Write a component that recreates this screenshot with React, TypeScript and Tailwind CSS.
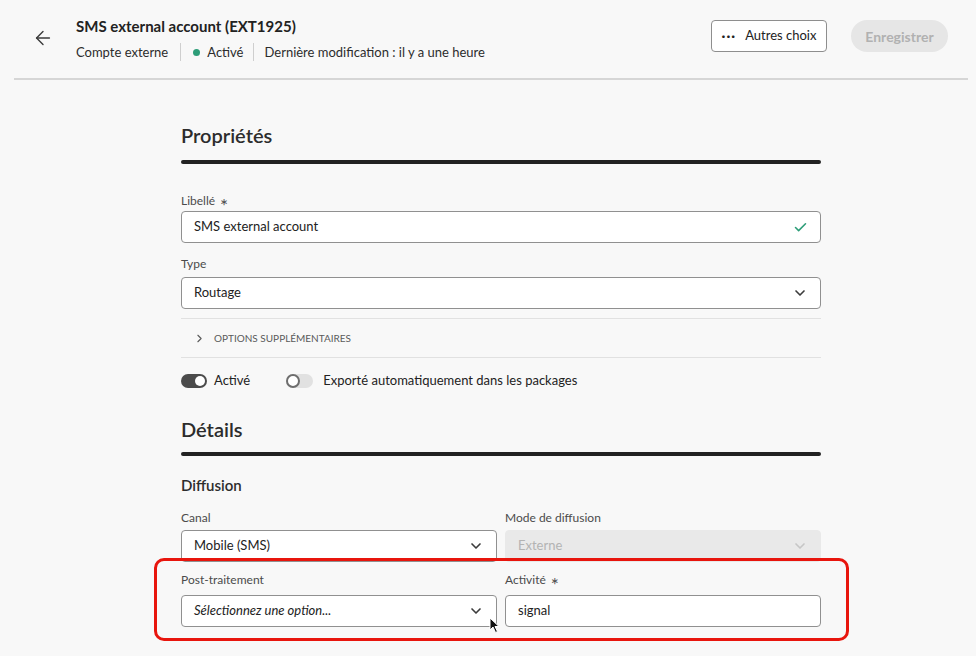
import { ArrowLeft, Check, ChevronDown, ChevronRight } from "lucide-react";

const font = { fontFamily: "Lato, 'Noto Sans', sans-serif" };

function Label({ text, required }: { text: string; required?: boolean }) {
  return (
    <div className="flex h-[16px] items-center gap-[5px] text-[12px] text-[#4b4b4b]">
      {text}
      {required && <span className="translate-y-[4px] text-[19px] leading-none text-[#4b4b4b]">*</span>}
    </div>
  );
}

function Select({ value, placeholder, disabled }: { value: string; placeholder?: boolean; disabled?: boolean }) {
  return (
    <div
      className={`flex h-[32px] items-center justify-between rounded-[4px] border px-3 text-[13px] ${
        disabled
          ? "border-[#e9e9e9] bg-[#e9e9e9] text-[#b3b3b3]"
          : "border-[#909090] bg-white text-[#222]"
      } ${placeholder ? "italic" : ""}`}
    >
      <span>{value}</span>
      <ChevronDown size={16} strokeWidth={2.5} className={disabled ? "text-[#c6c6c6]" : "text-[#3c3c3c]"} />
    </div>
  );
}

export default function App() {
  return (
    <div style={font} className="relative h-[656px] w-[976px] overflow-hidden bg-[#f8f8f8] text-[#222]">
      {/* header */}
      <div className="flex h-[78px] items-start pl-[32px] pr-[28px] pt-[16px]">
        <ArrowLeft size={22} strokeWidth={1.5} className="mt-[11px] text-[#3a3a3a]" />
        <div className="ml-[22px] flex-1">
          <div className="text-[15px] font-bold leading-[20px]">SMS external account (EXT1925)</div>
          <div className="mt-[7px] flex items-center text-[13px] leading-[18px] text-[#2c2c2c]">
            <span>Compte externe</span>
            <span className="mx-[12px] h-[18px] w-px bg-[#cfcfcf]" />
            <span className="mr-[7px] h-[7px] w-[7px] rounded-full bg-[#2d9d78]" />
            <span>Activé</span>
            <span className="mx-[10px] h-[18px] w-px bg-[#cfcfcf]" />
            <span>Dernière modification : il y a une heure</span>
          </div>
        </div>
        <div className="mt-[4px] flex items-center">
          <button className="flex h-[32px] w-[116px] items-center justify-center gap-[9px] rounded-[4px] border border-[#8e8e8e] bg-white text-[13px] text-[#222]">
            <span className="text-[14px] font-bold leading-none tracking-[1px]">···</span>
            <span>Autres choix</span>
          </button>
          <button className="ml-[24px] h-[32px] w-[97px] rounded-full bg-[#e6e6e6] text-[14px] font-bold text-[#b1b1b1]">
            Enregistrer
          </button>
        </div>
      </div>
      <div className="ml-[14px] h-[2px] w-[954px] bg-[#d6d6d6]" />

      {/* content */}
      <div className="ml-[181px] w-[640px]">
        <h2 className="mt-[41px] text-[20px] leading-[28px] font-semibold text-[#2c2c2c]">Propriétés</h2>
        <div className="mt-[11px] h-[4px] rounded-full bg-[#222]" />

        <div className="mt-[29px]">
          <Label text="Libellé" required />
        </div>
        <div className="mt-[2px] flex h-[32px] items-center justify-between rounded-[4px] border border-[#909090] bg-white px-3 text-[13px]">
          <span>SMS external account</span>
          <Check size={15} strokeWidth={2.5} className="text-[#2d9d78]" />
        </div>

        <div className="mt-[13px]">
          <Label text="Type" />
        </div>
        <div className="mt-[5px]">
          <Select value="Routage" />
        </div>

        <div className="mt-[9px] border-t border-[#e1e1e1]" />
        <div className="flex h-[38px] items-center gap-[8px] pl-[12px] text-[10px] uppercase text-[#5a5a5a]">
          <ChevronRight size={13} strokeWidth={2} className="text-[#5a5a5a]" />
          <span>Options supplémentaires</span>
        </div>
        <div className="border-t border-[#e1e1e1]" />

        <div className="mt-[16px] flex h-[14px] items-center text-[13px]">
          <div className="relative h-[14px] w-[26px] rounded-full bg-[#4b4b4b]">
            <div className="absolute right-[2px] top-[2px] h-[10px] w-[10px] rounded-full bg-white" />
          </div>
          <span className="ml-[7px]">Activé</span>
          <div className="relative ml-[36px] h-[14px] w-[27px] rounded-full bg-[#e1e1e1]">
            <div className="absolute left-0 top-0 h-[14px] w-[14px] rounded-full border-2 border-[#6e6e6e] bg-white" />
          </div>
          <span className="ml-[10px]">Exporté automatiquement dans les packages</span>
        </div>

        <h2 className="mt-[27px] text-[20px] leading-[28px] font-semibold text-[#2c2c2c]">Détails</h2>
        <div className="mt-[9px] h-[4px] rounded-full bg-[#222]" />

        <h3 className="mt-[19px] text-[15px] leading-[20px] font-semibold text-[#2c2c2c]">Diffusion</h3>

        <div className="mt-[15px] grid grid-cols-2 gap-x-[8px]">
          <div>
            <Label text="Canal" />
            <div className="mt-[4px]">
              <Select value="Mobile (SMS)" />
            </div>
          </div>
          <div>
            <Label text="Mode de diffusion" />
            <div className="mt-[4px]">
              <Select value="Externe" disabled />
            </div>
          </div>
        </div>

        <div className="relative mt-[10px] grid grid-cols-2 gap-x-[8px]">
          <div className="pointer-events-none absolute -left-[27px] -right-[28px] -top-[14px] -bottom-[14px] rounded-[10px] border-[3px] border-[#e8150d]" />
          <div>
            <Label text="Post-traitement" />
            <div className="mt-[7px]">
              <Select value="Sélectionnez une option..." placeholder />
            </div>
          </div>
          <div>
            <Label text="Activité" required />
            <div className="mt-[7px] flex h-[32px] items-center rounded-[4px] border border-[#909090] bg-white px-3 text-[13px]">
              signal
            </div>
          </div>
        </div>
      </div>

      {/* mouse pointer */}
      <svg className="absolute left-[489px] top-[617px]" width="11" height="17" viewBox="0 0 11 17">
        <path d="M1 1 L1 13 L4 10 L6.5 15.5 L8.5 14.5 L6 9.5 L10 9.5 Z" fill="#111" stroke="#fff" strokeWidth="1" />
      </svg>
    </div>
  );
}
